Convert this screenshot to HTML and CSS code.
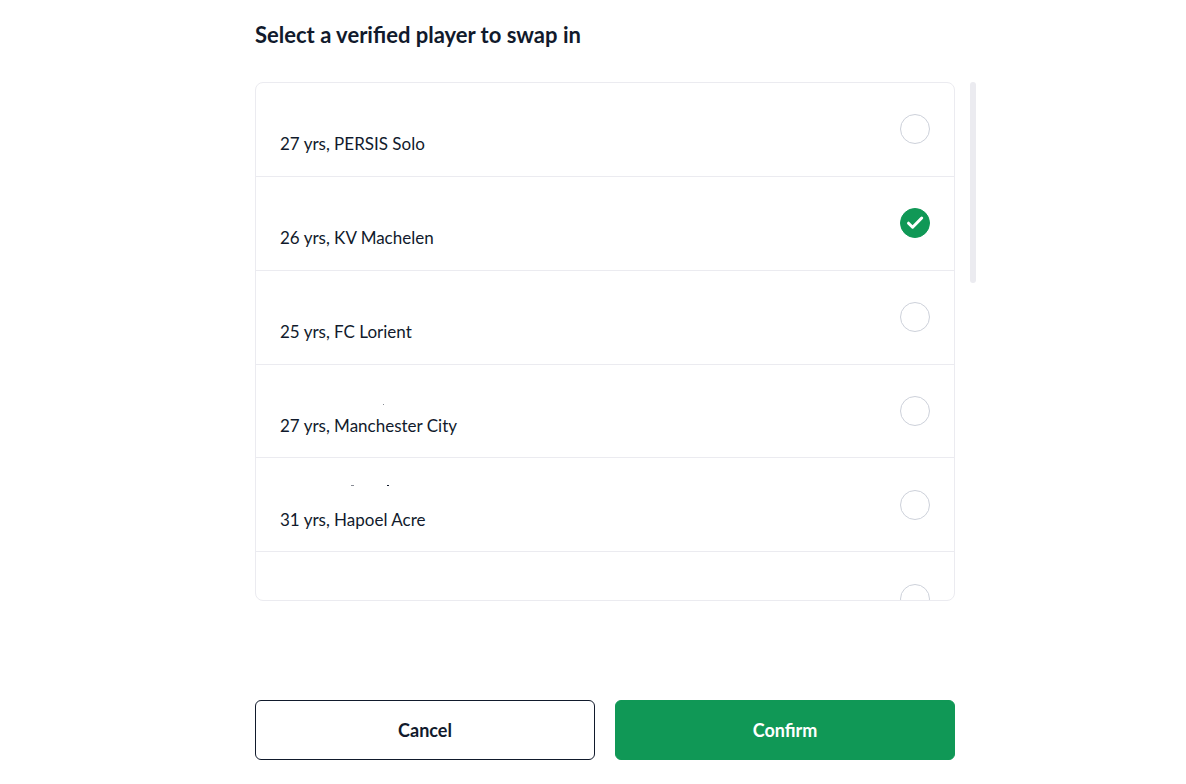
FILE: index.html
```html
<!DOCTYPE html>
<html lang="en">
<head>
<meta charset="utf-8">
<meta name="viewport" content="width=device-width, initial-scale=1">
<title>Swap player</title>
<link rel="stylesheet" href="styles.css">
</head>
<body>
<main class="page">
<form class="swap">
<h1 class="title">Select a verified player to swap in</h1>
<div class="picker">
<div class="list">
<ul class="rows">
<li class="row"><label class="player"><span class="info"><span class="name"></span><span class="meta">27 yrs, PERSIS Solo</span></span><span class="choice"><input class="radio" type="radio" name="player"></span></label></li>
<li class="row"><label class="player"><span class="info"><span class="name"></span><span class="meta">26 yrs, KV Machelen</span></span><span class="choice"><input class="radio" type="radio" name="player" checked><svg class="tick" viewBox="0 0 30 30" aria-hidden="true"><path d="M8.5 15.2 12.6 19.2 21.7 10"/></svg></span></label></li>
<li class="row"><label class="player"><span class="info"><span class="name"></span><span class="meta">25 yrs, FC Lorient</span></span><span class="choice"><input class="radio" type="radio" name="player"></span></label></li>
<li class="row"><label class="player"><span class="info"><span class="name"><svg class="marks" viewBox="0 0 120 30" aria-hidden="true"><path class="faint" d="M103 23h1v1h-1z"/></svg></span><span class="meta">27 yrs, Manchester City</span></span><span class="choice"><input class="radio" type="radio" name="player"></span></label></li>
<li class="row"><label class="player"><span class="info"><span class="name"><svg class="marks" viewBox="0 0 120 30" aria-hidden="true"><path class="faint" d="M71 10h3v1h-3z"/><path d="M107 10h2v1h-2z"/></svg></span><span class="meta">31 yrs, Hapoel Acre</span></span><span class="choice"><input class="radio" type="radio" name="player"></span></label></li>
<li class="row"><label class="player"><span class="info"><span class="name"></span><span class="meta"></span></span><span class="choice"><input class="radio" type="radio" name="player" aria-label="Next player"></span></label></li>
</ul>
</div>
<div class="thumb"></div>
</div>
<div class="actions">
<button class="button" type="button">Cancel</button>
<button class="button primary" type="submit">Confirm</button>
</div>
</form>
</main>
</body>
</html>
```
FILE: styles.css
```css
* {
  box-sizing: border-box;
}

body {
  margin: 0;
  background: #fff;
  color: #111a2c;
  font-family: Lato, sans-serif;
  font-size: 17px;
  line-height: 30px;
}

.page {
  padding: 20px 0 20px 24px;
}

.swap {
  max-width: 700px;
  margin: 0 auto;
}

.title {
  margin: 0 0 32px;
  font-size: 22px;
  font-weight: 700;
  line-height: 30px;
}

.picker {
  display: grid;
  grid-template-columns: minmax(0, 1fr) 6px;
  column-gap: 15px;
  margin-right: -21px;
}

.list {
  height: 519px;
  overflow: hidden;
  border: 1px solid #ebebf0;
  border-radius: 8px;
}

.rows {
  display: grid;
  grid-auto-rows: 1fr;
  height: 563px;
  margin: 0;
  padding: 0;
  list-style: none;
}

.row {
  display: grid;
  border-bottom: 1px solid #ebebf0;
}

.player {
  display: flex;
  align-items: center;
  justify-content: space-between;
  padding: 0 24px;
}

.info {
  display: grid;
  grid-template-rows: 30px 30px;
}

.name {
  display: flex;
}

.marks {
  width: 120px;
  height: 30px;
  fill: #111a2c;
}

.faint {
  opacity: 0.5;
}

.choice {
  display: grid;
  width: 30px;
  height: 30px;
}

.radio,
.tick {
  grid-area: 1 / 1;
  width: 30px;
  height: 30px;
  margin: 0;
}

.radio {
  appearance: none;
  border: 1px solid #cdd1da;
  border-radius: 50%;
}

.radio:checked {
  border-color: #109856;
  background: #109856;
}

.tick {
  fill: none;
  stroke: #fff;
  stroke-width: 3;
  stroke-linecap: round;
  stroke-linejoin: round;
  pointer-events: none;
}

.radio:not(:checked) + .tick {
  display: none;
}

.thumb {
  height: 201px;
  border-radius: 3px;
  background: #ebebf0;
}

.actions {
  display: grid;
  grid-template-columns: 1fr 1fr;
  gap: 20px;
  margin-top: 99px;
}

.button {
  height: 60px;
  border: 1px solid #111a2c;
  border-radius: 6px;
  background: #fff;
  color: #111a2c;
  font: inherit;
  font-size: 18px;
  font-weight: 700;
}

.primary {
  border-color: #109856;
  background: #109856;
  color: #fff;
}
```
